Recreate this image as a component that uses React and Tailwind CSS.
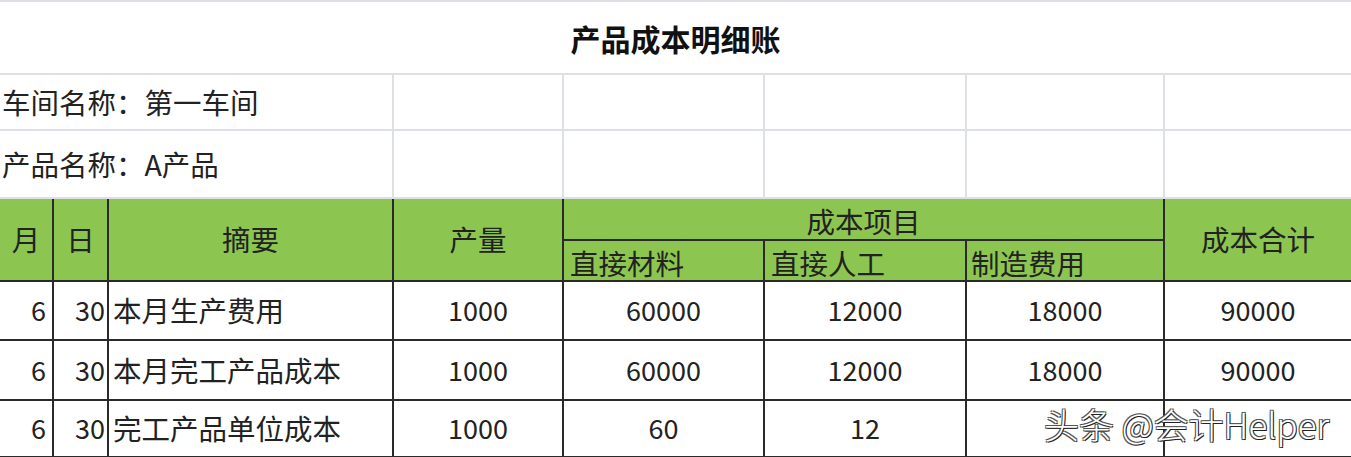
const rows = [
  { m: '6', d: '30', note: '本月生产费用', qty: '1000', mat: '60000', labor: '12000', mfg: '18000', total: '90000' },
  { m: '6', d: '30', note: '本月完工产品成本', qty: '1000', mat: '60000', labor: '12000', mfg: '18000', total: '90000' },
  { m: '6', d: '30', note: '完工产品单位成本', qty: '1000', mat: '60', labor: '12', mfg: '', total: '' },
]

const light = 'border-2 border-[#dde1e6]'
const dark = 'border-2 border-[#2a2a2a]'
const num = `${dark} text-center align-middle text-[27px]`

export default function App() {
  return (
    <div className="relative h-[457px] w-[1351px] overflow-hidden bg-white font-['Noto_Sans_CJK_SC',sans-serif] text-[#222]">
      <table className="w-[1352px] table-fixed border-collapse text-[28.5px] leading-[1.2]">
        <colgroup>
          <col className="w-[53px]" />
          <col className="w-[55px]" />
          <col className="w-[285px]" />
          <col className="w-[170px]" />
          <col className="w-[201px]" />
          <col className="w-[202px]" />
          <col className="w-[198px]" />
          <col className="w-[188px]" />
        </colgroup>
        <tbody>
          {/* title */}
          <tr className="h-[73px]">
            <td colSpan={8} className={`${light} border-l-0 text-center align-middle text-[30px] font-bold text-[#111]`}>
              产品成本明细账
            </td>
          </tr>
          <tr className="h-[56px]">
            <td colSpan={3} className={`${light} border-l-0 pl-0.5 align-middle`}>车间名称：第一车间</td>
            <td className={light} />
            <td className={light} />
            <td className={light} />
            <td className={light} />
            <td className={light} />
          </tr>
          <tr className="h-[68px]">
            <td colSpan={3} className={`${light} border-l-0 pl-0.5 align-middle`}>产品名称：A产品</td>
            <td className={light} />
            <td className={light} />
            <td className={light} />
            <td className={light} />
            <td className={light} />
          </tr>

          {/* header */}
          <tr className="h-[42px] bg-[#8cc650]">
            <td rowSpan={2} className={`${dark} border-l-0 text-center align-middle`}>月</td>
            <td rowSpan={2} className={`${dark} text-center align-middle`}>日</td>
            <td rowSpan={2} className={`${dark} text-center align-middle`}>摘要</td>
            <td rowSpan={2} className={`${dark} text-center align-middle`}>产量</td>
            <td colSpan={3} className={`${dark} pt-1 text-center align-middle`}>成本项目</td>
            <td rowSpan={2} className={`${dark} text-center align-middle`}>成本合计</td>
          </tr>
          <tr className="h-[41px] bg-[#8cc650]">
            <td className={`${dark} pl-1.5 align-bottom`}>直接材料</td>
            <td className={`${dark} pl-1.5 align-bottom`}>直接人工</td>
            <td className={`${dark} pl-1 align-bottom`}>制造费用</td>
          </tr>

          {/* data */}
          {rows.map((r, i) => (
            <tr key={i} className={i === 2 ? 'h-[57px]' : i === 1 ? 'h-[60px]' : 'h-[59px]'}>
              <td className={`${dark} border-l-0 pr-1.5 text-right align-middle text-[27px]`}>{r.m}</td>
              <td className={`${dark} pr-0.5 text-right align-middle text-[27px]`}>{r.d}</td>
              <td className={`${dark} pl-1 align-middle`}>{r.note}</td>
              <td className={num}>{r.qty}</td>
              <td className={num}>{r.mat}</td>
              <td className={num}>{r.labor}</td>
              <td className={num}>{r.mfg}</td>
              <td className={num}>{r.total}</td>
            </tr>
          ))}
        </tbody>
      </table>

      {/* watermark */}
      <div className="absolute left-[1044px] top-[406px] whitespace-nowrap text-[35px] font-light leading-none text-white [text-shadow:1px_1px_0_#222,-1px_-1px_0_#555,1px_-1px_0_#555,-1px_1px_0_#555]">
        头条 @会计Helper
      </div>
    </div>
  )
}
